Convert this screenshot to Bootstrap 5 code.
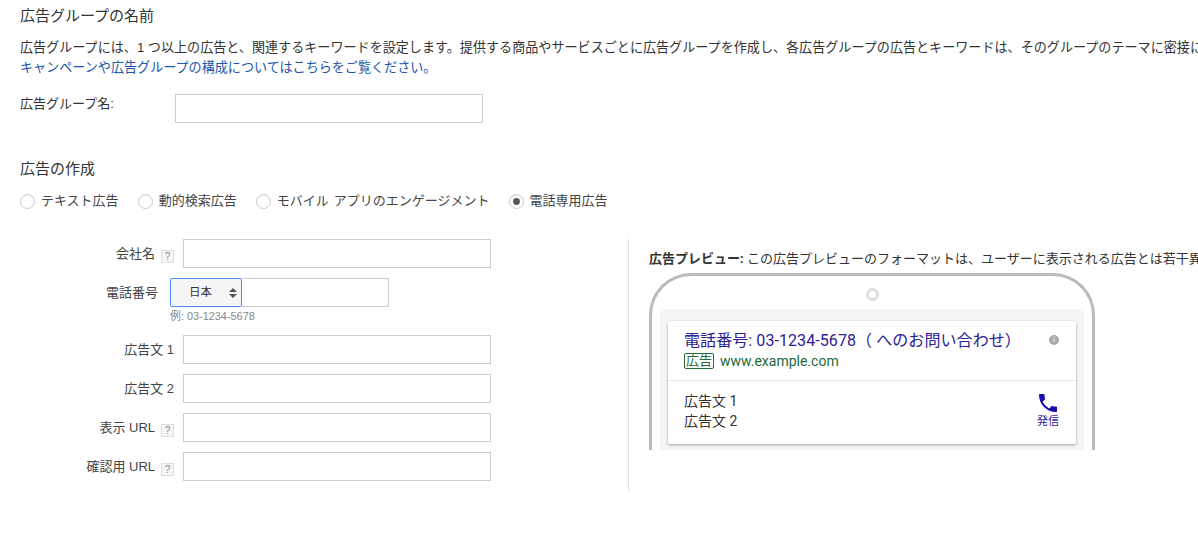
<!DOCTYPE html>
<html lang="ja">
<head>
<meta charset="utf-8">
<title>広告の作成</title>
<link rel="stylesheet" href="https://cdn.jsdelivr.net/npm/bootstrap@5.3.0/dist/css/bootstrap.min.css">
<style>
html, body { height: 100%; overflow: hidden; }
body { font-family: "Liberation Sans", Arial, "Noto Sans CJK JP", sans-serif; font-size: 13px; line-height: 20px; color: #333; background: #fff; }
.page-wrap { padding: 6px 0 0 20px; width: 1198px; overflow: hidden; white-space: nowrap; }
.sect-title { font-size: 15px; font-weight: 400; line-height: 20px; margin: 0; color: #333; }
.desc { margin: 12px 0 0; font-size: 13.08px; }
.desc a { color: #1c56a8; text-decoration: none; display: block; }
.name-row { margin-top: 16px; height: 29px; }
.name-row label { width: 155px; margin-bottom: 10px; }
.plain-input { width: 308px; height: 29px; border: 1px solid #ccc; border-radius: 0; padding: 2px 6px; font-size: 13px; }
.create-title { margin-top: 36px; }
.type-radios { margin-top: 12px; gap: 19px; }
.type-radios .form-check { padding: 0; margin: 0; min-height: 20px; display: flex; align-items: center; gap: 6px; }
.type-radios .form-check-input { float: none; margin: 0; width: 15px; height: 15px; border-color: #ccc; box-shadow: inset 0 1px 1px #eee; }
.type-radios .form-check-input:checked { background-color: #fff; border-color: #ccc; background-image: url("data:image/svg+xml,%3csvg xmlns='http://www.w3.org/2000/svg' viewBox='-4 -4 8 8'%3e%3ccircle r='2.1' fill='%23555'/%3e%3c/svg%3e"); }
.type-radios .form-check-label { color: #444; font-size: 13px; word-spacing: 1.5px; }
.build-area { margin-top: 28px; }
.form-side { width: 608px; flex: none; }
.field-row { height: 29px; margin-bottom: 10px; }
.field-label { width: 154px; margin-right: 9px; flex: none; text-align: right; color: #444; }
.help-mark { display: inline-block; width: 13px; height: 13px; margin-left: 6px; border: 1px solid #ddd; background: #f6f6f6; color: #888; font-size: 10px; line-height: 11px; text-align: center; vertical-align: -2px; }
.phone-label { width: 138px; margin-right: 12px; }
.phone-group { width: 219px; height: 29px; }
.country-select { width: 72px; height: 29px; flex: none; border: 1px solid #4d90fe; border-radius: 2px; padding: 0 0 0 18px; font-size: 11.5px; color: #333; background-color: #f5f5f5; background-position: right 2.5px center; background-size: 12px 14px; background-image: url("data:image/svg+xml,%3csvg xmlns='http://www.w3.org/2000/svg' viewBox='0 0 12 14'%3e%3cpath fill='%23555' d='M6 2l4 4H2zM6 12l4-4H2z'/%3e%3c/svg%3e"); }
.phone-input { flex: 1; height: 29px; border: 1px solid #ccc; border-left: 0; border-radius: 0; padding: 2px 6px; }
.phone-hint { margin: 0 0 10px 150px; font-size: 10.9px; line-height: 18px; color: #888; }
.preview-side { border-left: 1px solid #ddd; height: 252px; padding: 10px 0 0 20px; flex: 1; overflow: hidden; min-width: 0; font-family: Roboto, "Noto Sans CJK JP", sans-serif; }
.preview-note { line-height: 20px; }
.preview-note b { font-weight: 700; color: #333; }
.phone-frame { width: 446px; height: 177px; margin-top: 4px; border: 3px solid #bbb; border-bottom: 0; border-radius: 42px 42px 0 0; padding: 0 8px; display: flex; flex-direction: column; }
.speaker { width: 13px; height: 13px; border: 3px solid #ddd; border-radius: 50%; margin: 12px auto 8px; flex: none; }
.screen-area { background: #f5f5f5; flex: 1; padding: 12px 8px 0; }
.ad-card { border: 0; border-radius: 2px; background: #fff; box-shadow: 0 1px 3px rgba(0,0,0,.35); height: 123px; }
.ad-top { padding: 9px 16px 0; border-bottom: 1px solid #e6e6e6; height: 60px; }
.ad-title { font-size: 16px; line-height: 21px; color: #2b2096; letter-spacing: .08px; }
.ad-line { line-height: 20px; font-size: 14px; color: #24683a; }
.ad-tag { display: inline-block; border: 1px solid #24683a; border-radius: 2px; font-size: 13px; line-height: 14px; padding: 0 1px; margin-right: 6px; vertical-align: 1px; }
.info-dot { width: 10px; height: 10px; border-radius: 50%; background: #aaa; color: #e4e4e4; font-size: 8px; line-height: 10px; text-align: center; font-weight: 700; margin-top: 5px; margin-right: 1px; }
.ad-bottom { padding: 10px 16px 0; color: #333; font-size: 14px; line-height: 20px; }
.call-btn { color: #2b2096; font-size: 11px; line-height: 14px; text-align: center; }
.call-btn svg { display: block; margin: 0 auto; }
</style>
</head>
<body>
<div class="page-wrap">
  <h2 class="sect-title">広告グループの名前</h2>
  <p class="desc">広告グループには、1 つ以上の広告と、関連するキーワードを設定します。提供する商品やサービスごとに広告グループを作成し、各広告グループの広告とキーワードは、そのグループのテーマに密接に関連したものにします。<a href="#">キャンペーンや広告グループの構成についてはこちらをご覧ください。</a></p>
  <div class="name-row d-flex align-items-start">
    <label for="group-name">広告グループ名:</label>
    <input id="group-name" type="text" class="form-control plain-input">
  </div>
  <h2 class="sect-title create-title">広告の作成</h2>
  <div class="type-radios d-flex">
    <div class="form-check"><input class="form-check-input" type="radio" name="adtype" id="t1"><label class="form-check-label" for="t1">テキスト広告</label></div>
    <div class="form-check"><input class="form-check-input" type="radio" name="adtype" id="t2"><label class="form-check-label" for="t2">動的検索広告</label></div>
    <div class="form-check"><input class="form-check-input" type="radio" name="adtype" id="t3"><label class="form-check-label" for="t3">モバイル アプリのエンゲージメント</label></div>
    <div class="form-check"><input class="form-check-input" type="radio" name="adtype" id="t4" checked><label class="form-check-label" for="t4">電話専用広告</label></div>
  </div>
  <div class="build-area d-flex">
    <div class="form-side">
      <div class="field-row d-flex align-items-center">
        <div class="field-label">会社名<span class="help-mark">?</span></div>
        <input type="text" class="form-control plain-input">
      </div>
      <div class="d-flex align-items-center">
        <div class="field-label phone-label">電話番号</div>
        <div class="phone-group d-flex">
          <select class="form-select country-select"><option>日本</option></select>
          <input type="text" class="form-control phone-input">
        </div>
      </div>
      <div class="phone-hint">例: 03-1234-5678</div>
      <div class="field-row d-flex align-items-center">
        <div class="field-label">広告文 1</div>
        <input type="text" class="form-control plain-input">
      </div>
      <div class="field-row d-flex align-items-center">
        <div class="field-label">広告文 2</div>
        <input type="text" class="form-control plain-input">
      </div>
      <div class="field-row d-flex align-items-center">
        <div class="field-label">表示 URL<span class="help-mark">?</span></div>
        <input type="text" class="form-control plain-input">
      </div>
      <div class="field-row d-flex align-items-center">
        <div class="field-label">確認用 URL<span class="help-mark">?</span></div>
        <input type="text" class="form-control plain-input">
      </div>
    </div>
    <div class="preview-side">
      <div class="preview-note"><b>広告プレビュー:</b> この広告プレビューのフォーマットは、ユーザーに表示される広告とは若干異なる場合があります。</div>
      <div class="phone-frame">
        <div class="speaker"></div>
        <div class="screen-area">
          <div class="card ad-card">
            <div class="ad-top d-flex justify-content-between">
              <div>
                <div class="ad-title">電話番号: 03-1234-5678（ へのお問い合わせ）</div>
                <div class="ad-line"><span class="ad-tag">広告</span>www.example.com</div>
              </div>
              <div class="info-dot">i</div>
            </div>
            <div class="ad-bottom d-flex justify-content-between">
              <div><div>広告文 1</div><div>広告文 2</div></div>
              <div class="call-btn">
                <svg width="24" height="24" viewBox="0 0 24 24" fill="#1a0dab"><path d="M6.62 10.79c1.44 2.83 3.76 5.14 6.59 6.59l2.2-2.2c.27-.27.67-.36 1.02-.24 1.12.37 2.33.57 3.57.57.55 0 1 .45 1 1V20c0 .55-.45 1-1 1-9.39 0-17-7.61-17-17 0-.55.45-1 1-1h3.5c.55 0 1 .45 1 1 0 1.25.2 2.45.57 3.57.11.35.03.74-.25 1.02l-2.2 2.2z"/></svg>
                発信
              </div>
            </div>
          </div>
        </div>
      </div>
    </div>
  </div>
</div>
<script src="https://cdn.jsdelivr.net/npm/bootstrap@5.3.0/dist/js/bootstrap.bundle.min.js"></script>
</body>
</html>
